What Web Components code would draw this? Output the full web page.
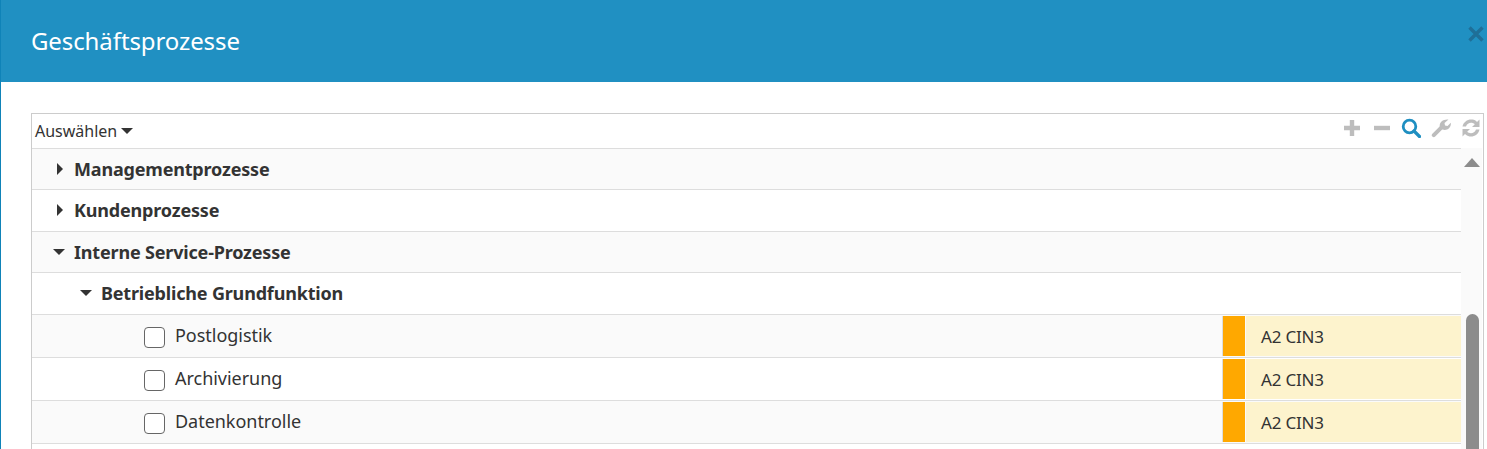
<!DOCTYPE html>
<html lang="de"><head><meta charset="utf-8">
<style>
html,body{margin:0;padding:0;height:449px;overflow:hidden;background:#fff}
body{font-family:"Noto Sans",sans-serif;color:#333}
</style></head><body>
<gp-modal heading="Geschäftsprozesse">
  <gp-tree>
    <gp-group h="41" depth="0" shade>Managementprozesse</gp-group>
    <gp-group h="42" depth="0">Kundenprozesse</gp-group>
    <gp-group h="41" depth="0" shade open>Interne Service-Prozesse</gp-group>
    <gp-group h="42" depth="1" open>Betriebliche Grundfunktion</gp-group>
    <gp-item shade>Postlogistik</gp-item>
    <gp-item>Archivierung</gp-item>
    <gp-item shade>Datenkontrolle</gp-item>
  </gp-tree>
</gp-modal>
<script>
function def(name,html,init){customElements.define(name,class extends HTMLElement{constructor(){super();this.attachShadow({mode:'open'}).innerHTML=html;}connectedCallback(){init&&init(this,this.shadowRoot);}});}
def('gp-modal',`<style>
:host{display:block;height:449px;box-sizing:border-box;border-left:1px solid #0f83b8;overflow:hidden}
header{height:82px;box-sizing:border-box;background:#2090c2;display:flex;align-items:center;justify-content:space-between;padding:0 2px 1px 31px;margin-left:-1px}
h1{margin:0;font:400 24px/1 "Noto Sans",sans-serif;letter-spacing:-.1px;color:#fff}
svg{display:block;margin-top:-14px}
main{padding:31px 3px 0 30px}
</style><header><h1></h1><svg width="18" height="18" viewBox="0 0 18 18"><path d="M2.500 2.500l13 13M15.500 2.500l-13 13" stroke="#1f6f98" stroke-width="3.400"/></svg></header><main><slot></slot></main>`,(e,s)=>{s.querySelector('h1').textContent=e.getAttribute('heading')});
def('gp-tree',`<style>
:host{display:block;border:1px solid #ccc;border-bottom:0;height:340px;overflow:hidden;position:relative}
.bar{height:34px;display:flex;align-items:center;justify-content:space-between;padding:0 2px 0 3px;font-size:16px;color:#333}
.sel{display:flex;align-items:center;gap:4px;margin-top:-1px}
.sel i{width:0;height:0;border:6px solid transparent;border-top:6px solid #333;border-bottom:0;margin-top:1px}
.tools{display:flex;gap:10px;margin-top:-6px}
.tools svg{display:block}
.tools .s{margin-left:-1px}
.body{display:flex}
.rows{width:1429px;border-top:1px solid #ddd}
.sb{width:21px;background:#fafafa;position:relative;height:310px}
.up{position:absolute;left:3px;top:10px;width:0;height:0;border:8px solid transparent;border-bottom:9px solid #8c8c8c;border-top:0}
.th{position:absolute;left:5px;top:166px;width:13px;height:140px;background:#8c8c8c;border-radius:7px 7px 0 0}
</style>
<div class="bar"><span class="sel">Auswählen<i></i></span><span class="tools">
<svg width="20" height="20" viewBox="0 0 20 20"><path d="M2 10h16M10 2v16" stroke="#bdbdbd" stroke-width="4.400"/></svg>
<svg width="20" height="20" viewBox="0 0 20 20"><path d="M2 10h16" stroke="#bdbdbd" stroke-width="4.400"/></svg>
<svg class="s" width="20" height="20" viewBox="0 0 20 20"><circle cx="8.500" cy="8.500" r="6.300" fill="none" stroke="#1f8fc1" stroke-width="2.800"/><path d="M13 13l5.500 5.500" stroke="#1f8fc1" stroke-width="3.200" stroke-linecap="round"/></svg>
<svg width="20" height="20" viewBox="0 0 20 20"><path d="M2.800 17.200l8-8" stroke="#bdbdbd" stroke-width="4" stroke-linecap="round"/><path d="M9 9.500C7.500 5 11.500 .8 17.500 1.500L13.500 5l.5 2.500 2.500.5 3.300-3.300C20.500 10 15.800 13 11.500 11.500z" fill="#bdbdbd"/></svg>
<svg width="20" height="20" viewBox="0 0 20 20"><path d="M1.500 8.500C2.500 3.500 7 .8 11.500 1.500c1.800.3 3.400 1.200 4.500 2.400L18.500 1.500V9H11l2.800-2.800c-2.600-2.400-7.300-2-8.800 2.300z" fill="#bdbdbd"/><path d="M18.500 11.500c-1 5-5.500 7.700-10 7-1.800-.3-3.400-1.200-4.500-2.400L1.500 18.500V11H9l-2.800 2.800c2.600 2.400 7.300 2 8.800-2.300z" fill="#bdbdbd"/></svg>
</span></div>
<div class="body"><div class="rows"><slot></slot></div><div class="sb"><div class="up"></div><div class="th"></div></div></div>`);
def('gp-group',`<style>
:host{display:flex;align-items:center;box-sizing:border-box;border-bottom:1px solid #ddd;font-weight:700;font-size:18px;letter-spacing:-.18px;color:#333;background:var(--bg,#fff)}
i{width:0;height:0;flex:none}
.closed{border:6px solid transparent;border-left:6px solid #333;border-right:0;margin-left:2px}
.open{border:6px solid transparent;border-top:6px solid #333;border-bottom:0}
.w{display:flex;justify-content:center;width:14px;margin-right:8px}
</style><span class="w"><i></i></span><slot></slot>`,(e,s)=>{
 const h=+e.getAttribute('h');e.style.height=h+'px';if(h==42)e.style.paddingBottom='2px';
 const d=+e.getAttribute('depth');e.style.paddingLeft=(d?47:20)+'px';
 if(e.hasAttribute('shade'))e.style.setProperty('--bg','#fafafa');
 s.querySelector('i').className=e.hasAttribute('open')?'open':'closed';
});
def('gp-item',`<style>
:host{display:flex;height:43px;box-sizing:border-box;border-bottom:1px solid #ddd;background:var(--bg,#fff);font-size:18px;letter-spacing:-.03px}
.name{flex:1;display:flex;align-items:center;padding-left:112px;gap:10px}
.cb{box-sizing:content-box;width:18px;height:18px;border:1px solid #666;border-radius:4px;background:#fff;margin-top:2px;padding:0 1px 1px 0}
.txt{margin-top:-2px}
.dot{width:22px;margin:1px 0;background:#ffa800;border-left:1px solid #ddd}
.lvl{width:215px;margin:1px 0 1px 1px;background:#fdf3cd;display:flex;align-items:center;padding-left:15px;box-sizing:border-box;color:#333;font-size:17px;letter-spacing:-.2px}
</style><span class="name"><span class="cb"></span><span class="txt"><slot></slot></span></span><span class="dot"></span><span class="lvl">A2 CIN3</span>`,(e)=>{if(e.hasAttribute('shade'))e.style.setProperty('--bg','#fafafa');});
</script>
</body></html>
